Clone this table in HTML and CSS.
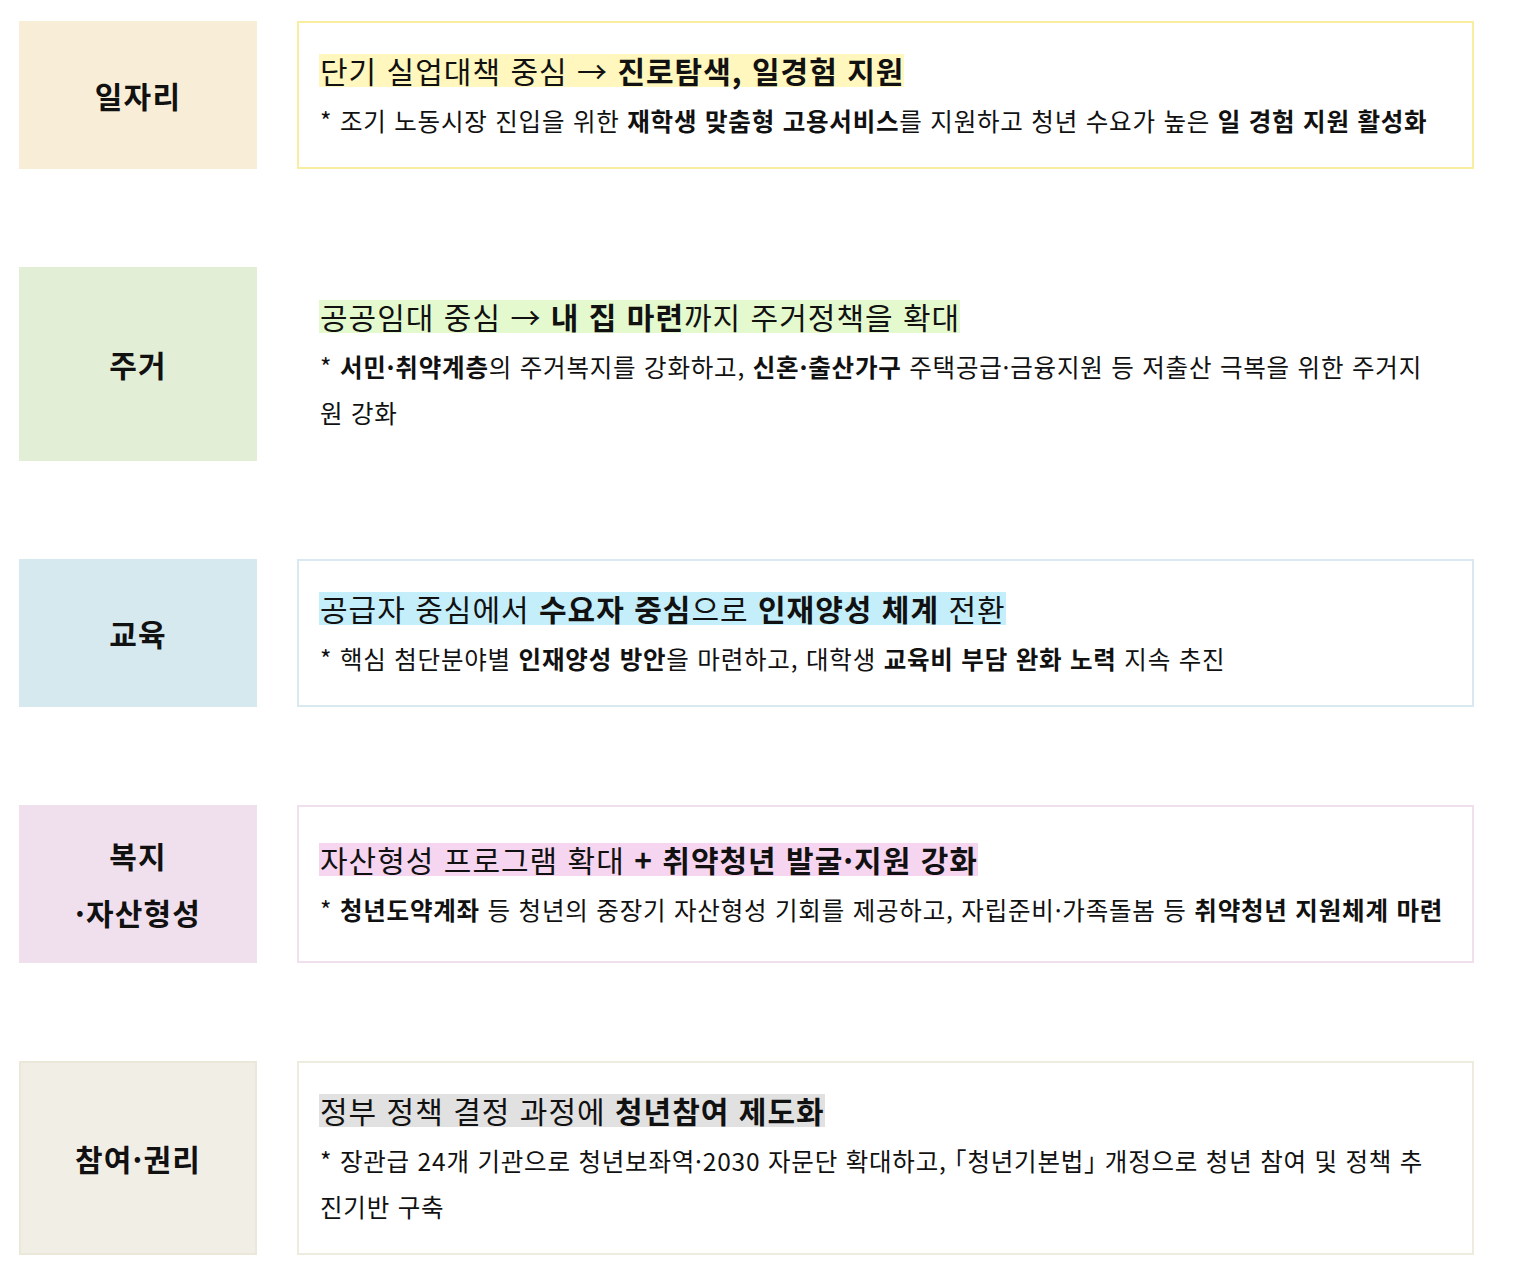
FILE: index.html
```html
<!DOCTYPE html>
<html lang="ko">
<head>
<meta charset="utf-8">
<title>청년정책 방향</title>
<link rel="stylesheet" href="styles.css">
</head>
<body>
<main class="board">
  <section class="row row-job">
    <div class="label">일자리</div>
    <div class="card">
      <p class="title"><span class="hl">단기 실업대책 중심 → <b>진로탐색, 일경험 지원</b></span></p>
      <p class="desc">* 조기 노동시장 진입을 위한 <b>재학생 맞춤형 고용서비스</b>를 지원하고 청년 수요가 높은 <b>일 경험 지원 활성화</b></p>
    </div>
  </section>

  <section class="row row-house">
    <div class="label">주거</div>
    <div class="card">
      <p class="title"><span class="hl">공공임대 중심 → <b>내 집 마련</b>까지 주거정책을 확대</span></p>
      <p class="desc">* <b>서민·취약계층</b>의 주거복지를 강화하고, <b>신혼·출산가구</b> 주택공급·금융지원 등 저출산 극복을 위한 주거지<br>원 강화</p>
    </div>
  </section>

  <section class="row row-edu">
    <div class="label">교육</div>
    <div class="card">
      <p class="title"><span class="hl">공급자 중심에서 <b>수요자 중심</b>으로 <b>인재양성 체계</b> 전환</span></p>
      <p class="desc">* 핵심 첨단분야별 <b>인재양성 방안</b>을 마련하고, 대학생 <b>교육비 부담 완화 노력</b> 지속 추진</p>
    </div>
  </section>

  <section class="row row-welfare">
    <div class="label">복지<br>·자산형성</div>
    <div class="card">
      <p class="title"><span class="hl">자산형성 프로그램 확대 <b>+ 취약청년 발굴·지원 강화</b></span></p>
      <p class="desc">* <b>청년도약계좌</b> 등 청년의 중장기 자산형성 기회를 제공하고, 자립준비·가족돌봄 등 <b>취약청년 지원체계 마련</b></p>
    </div>
  </section>

  <section class="row row-rights">
    <div class="label">참여·권리</div>
    <div class="card">
      <p class="title"><span class="hl">정부 정책 결정 과정에 <b>청년참여 제도화</b></span></p>
      <p class="desc">* 장관급 24개 기관으로 청년보좌역·2030 자문단 확대하고, <span class="bracket">「</span>청년기본법<span class="bracket">」</span> 개정으로 청년 참여 및 정책 추<br>진기반 구축</p>
    </div>
  </section>
</main>
</body>
</html>
```

FILE: styles.css
```css
html, body {
  margin: 0;
  padding: 0;
  background: #ffffff;
}

body {
  font-family: "Noto Sans CJK KR", "Noto Sans", sans-serif;
  color: #111111;
}

.board {
  display: flex;
  flex-direction: column;
  gap: 98px;
  padding: 21px 0 30px 19px;
}

.row {
  display: grid;
  grid-template-columns: 238px 1177px;
  column-gap: 40px;
}

.label {
  display: flex;
  align-items: center;
  justify-content: center;
  text-align: center;
  padding: 22px 6px;
  font-size: 30px;
  font-weight: 700;
  letter-spacing: 1.2px;
  line-height: 57px;
  color: #111111;
  box-sizing: border-box;
}

.card {
  display: flex;
  flex-direction: column;
  justify-content: center;
  border: 2px solid transparent;
  padding: 31px 14px 23px 21px;
  box-sizing: border-box;
}

.title {
  margin: 0 0 11px;
  font-size: 30px;
  letter-spacing: 1px;
  line-height: 33px;
}

.hl {
  display: inline-block;
  margin-left: -1px;
  padding: 0 0 0 1px;
}

.title b,
.desc b {
  font-weight: 700;
}

.desc {
  margin: 0;
  font-size: 24.5px;
  letter-spacing: 0.8px;
  line-height: 46px;
  word-break: break-all;
}

.bracket {
  font-feature-settings: "halt" 1;
}

/* row colours */
.row-job .label { background: #f8eed7; }
.row-job .card { border-color: #f9ed9f; }
.row-job .hl { background: #fff7bd; }

.row-house .label { background: #e3eed6; }
.row-house .card { border-color: #ffffff; }
.row-house .hl { background: #e5f9cf; }

.row-edu .label { background: #d6e9ee; }
.row-edu .card { border-color: #d8eaf0; }
.row-edu .hl { background: #c4eefa; }

.row-welfare .label { background: #f0dfed; }
.row-welfare .card { border-color: #f0e0ee; }
.row-welfare .hl { background: #f6d5f0; }

.row-rights .label { background: #f1eee6; box-shadow: inset 0 0 0 2px #ebe7d9; }
.row-rights .card { border-color: #eeebdf; }
.row-rights .hl { background: #e1e1e1; }
```
